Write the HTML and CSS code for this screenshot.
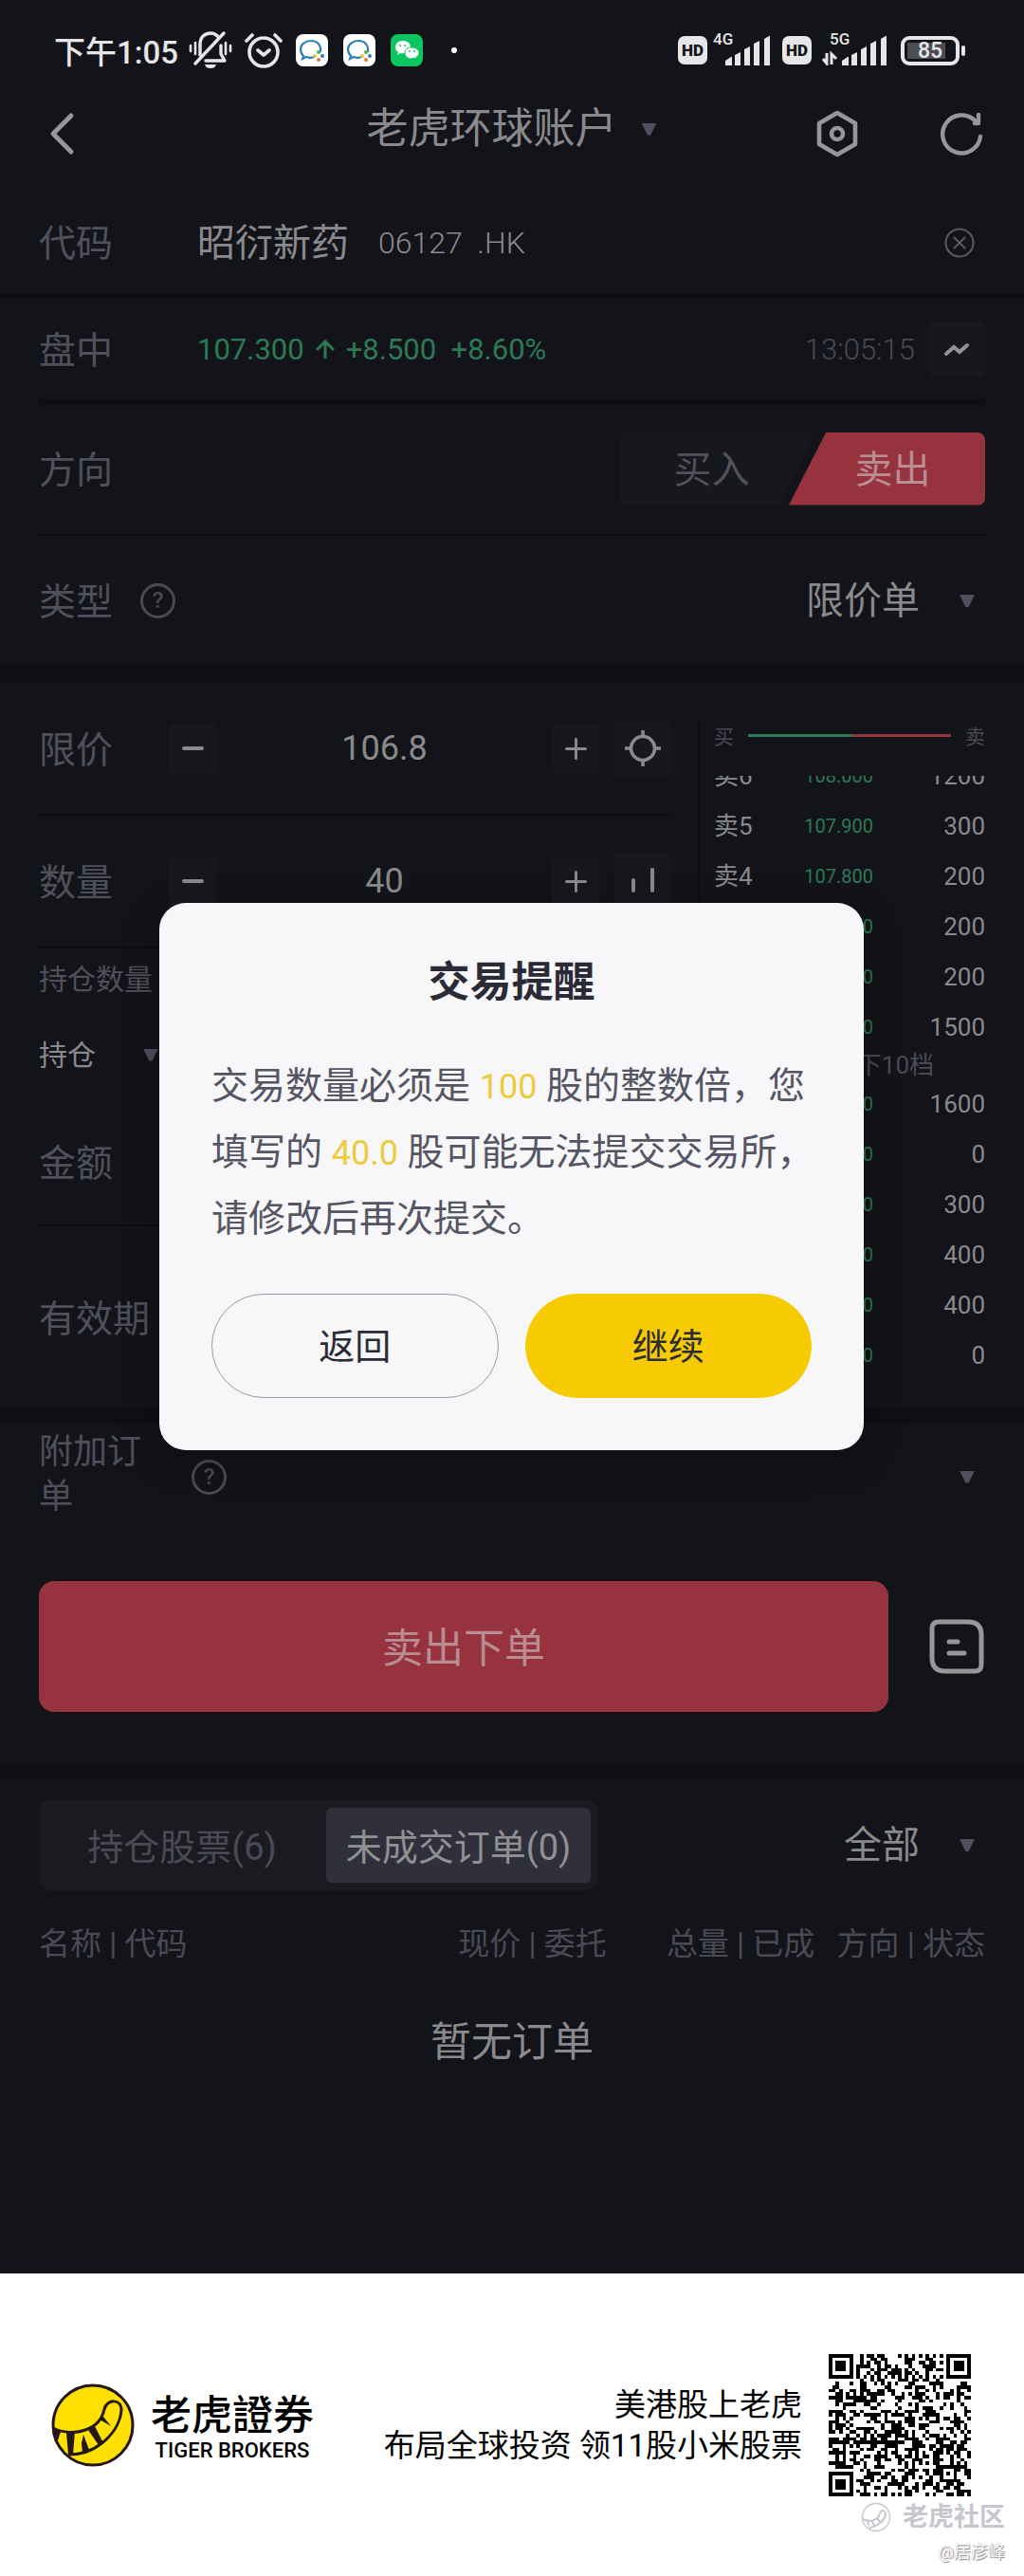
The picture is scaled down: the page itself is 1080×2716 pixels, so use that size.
FILE: index.html
```html
<!DOCTYPE html>
<html lang="zh-CN">
<head>
  <meta charset="UTF-8" />
  <title>交易下单</title>
  <meta name="viewport" content="width=device-width, initial-scale=1.0">
  <link rel="stylesheet" href="styles.css">
</head>
<body>
  <div class="screen">
    <div class="status-bar">
      <span class="clock">下午1:05</span>
      <svg class="mute" width="46" height="40" viewBox="0 0 46 40" fill="none" stroke="#e6e6e6" stroke-width="3.4" stroke-linecap="round">
        <path d="M12 25V14C12 6 17 2 23 2c4 0 7 2 9 5M34 15v9l4 7H18" stroke-linejoin="round" />
        <path d="M37 2L7 34" />
        <path d="M2 15v6M7 12v12M39 12v12M44 15v6" stroke-width="2.6" />
        <path d="M17 35h12c-1 3-3 4-6 4s-5-1-6-4z" fill="#e6e6e6" stroke="none" />
      </svg>
      <svg class="alarm" width="40" height="38" viewBox="0 0 40 38" fill="none" stroke="#e6e6e6" stroke-width="3.6" stroke-linecap="round" stroke-linejoin="round">
        <circle cx="20" cy="21" r="15" />
        <path d="M2 9l6-6M38 9l-6-6M14 19l6 5 6-5" />
      </svg>
      <svg class="app" width="34" height="34" viewBox="0 0 34 34">
        <rect width="34" height="34" rx="8" fill="#fff" />
        <path d="M26 19c1-7-3-12-10-12-6 0-11 4-11 9 0 3 1 5 3 7l-1 3 4-2c3 1 6 1 8 0" fill="none" stroke="#2f7fb5" stroke-width="2.2" />
        <circle cx="24" cy="19" r="2" fill="#5aae46" /><circle cx="28" cy="23" r="2" fill="#2f7fb5" />
        <circle cx="20" cy="23" r="2" fill="#f2c335" /><circle cx="24" cy="27" r="2" fill="#e8743b" />
      </svg>
      <svg class="app" width="34" height="34" viewBox="0 0 34 34">
        <rect width="34" height="34" rx="8" fill="#fff" />
        <path d="M26 19c1-7-3-12-10-12-6 0-11 4-11 9 0 3 1 5 3 7l-1 3 4-2c3 1 6 1 8 0" fill="none" stroke="#2f7fb5" stroke-width="2.2" />
        <circle cx="24" cy="19" r="2" fill="#5aae46" /><circle cx="28" cy="23" r="2" fill="#2f7fb5" />
        <circle cx="20" cy="23" r="2" fill="#f2c335" /><circle cx="24" cy="27" r="2" fill="#e8743b" />
      </svg>
      <svg class="app" width="34" height="34" viewBox="0 0 34 34">
        <rect width="34" height="34" rx="8" fill="#09c75e" />
        <path d="M13 7c-5 0-8 3-8 7 0 2 1 4 3 5l-1 3 3-2c5 1 11-1 11-6s-4-7-8-7z" fill="#fff" />
        <path d="M22 14c-4 0-7 2-7 6 0 3 3 6 7 6l3-1 2 2v-3c2-1 3-2 3-4 0-4-4-6-8-6z" fill="#fff" stroke="#09c75e" />
        <g fill="#09c75e"><circle cx="10" cy="12" r="1" /><circle cx="15" cy="12" r="1" /><circle cx="20" cy="18" r="1" /><circle cx="25" cy="18" r="1" /></g>
      </svg>
      <span class="dot"></span>

      <div class="signals">
        <span class="hd">HD</span>
        <span class="net">
          <small>4G</small>
          <svg width="62" height="32" viewBox="0 0 62 32" fill="#e6e6e6">
            <path d="M14 32v-5l6-4h1v9zM24 32V21l6-3v14zM34 32V15l6-3v20zM44 32V9l6-3v26zM55 32V4l5-3h1v31z" />
          </svg>
        </span>
        <span class="hd">HD</span>
        <span class="net data">
          <small>5G</small>
          <svg width="70" height="32" viewBox="-8 0 70 32" fill="#e6e6e6">
            <path d="M14 32v-5l6-4h1v9zM24 32V21l6-3v14zM34 32V15l6-3v20zM44 32V9l6-3v26zM55 32V4l5-3h1v31z" />
            <path d="M-6 25l4 5v-11M3 31V20l5 5" fill="none" stroke="#e6e6e6" stroke-width="3" />
          </svg>
        </span>
        <span class="battery">85</span>
      </div>
    </div>

    <header class="nav">
      <button class="icon-btn" aria-label="返回上页">
        <svg width="32" height="46" viewBox="0 0 32 46" fill="none" stroke="#979797" stroke-width="5" stroke-linecap="round" stroke-linejoin="round"><path d="M25 4L6 23l19 19" /></svg>
      </button>
      <button class="account">老虎环球账户 <i class="caret"></i></button>
      <div class="nav-tools">
        <button class="icon-btn" aria-label="设置">
          <svg width="46" height="52" viewBox="0 0 46 52" fill="none" stroke="#979797" stroke-width="4.6" stroke-linejoin="round"><path d="M23 4l19 11v22L23 48 4 37V15z" /><circle cx="23" cy="26" r="6" /></svg>
        </button>
        <button class="icon-btn" aria-label="刷新">
          <svg width="46" height="48" viewBox="0 0 46 48" fill="none" stroke="#979797" stroke-width="4.4" stroke-linecap="round" stroke-linejoin="round"><path d="M43 27A20 20 0 1 1 38 11M41 4v9h-4" /></svg>
        </button>
      </div>
    </header>

    <div class="row code-row">
      <span class="label">代码</span>
      <span class="stock">昭衍新药</span>
      <span class="symbol">06127&nbsp; .HK</span>
      <button class="icon-btn clear" aria-label="清除">
        <svg width="34" height="34" viewBox="0 0 34 34" fill="none" stroke="#5c5c5f" stroke-width="2"><circle cx="17" cy="17" r="14.5" /><path d="M11 11l12 12M23 11L11 23" /></svg>
      </button>
    </div>
    <div class="inset">
      <div class="row quote-row">
        <span class="label">盘中</span>
        <span class="quote">107.300
          <svg width="20" height="20" viewBox="0 0 20 20" fill="none" stroke="#2c7a55" stroke-width="3"><path d="M10 20V2M1 11l9-9 9 9" /></svg>
          +8.500&nbsp; +8.60%</span>
        <time>13:05:15</time>
        <button class="box wide" aria-label="走势">
          <svg width="28" height="16" viewBox="0 0 28 16" fill="none" stroke="#929292" stroke-width="4" stroke-linecap="round"><path d="M3 13l8-7 6 5 8-7" /></svg>
        </button>
      </div>
      <div class="row side-row">
        <span class="label">方向</span>
        <div class="toggle">
          <button class="buy">买入</button>
          <button class="sell">卖出</button>
        </div>
      </div>
      <div class="row type-row">
        <label class="label" for="type">类型</label>
        <button class="help" aria-label="说明">?</button>
        <span class="picker"><select id="type"><option>限价单</option></select><i class="caret"></i></span>
      </div>
    </div>

    <div class="trade">
      <div class="form">
        <div class="row tall">
          <label class="label" for="price">限价</label>
          <button class="box" aria-label="减少价格"><i class="minus"></i></button>
          <input id="price" type="text" value="106.8">
          <button class="box" aria-label="增加价格"><i class="plus"></i></button>
          <button class="box wide" aria-label="跟踪价">
            <svg width="38" height="38" viewBox="0 0 38 38" fill="none" stroke="#8a8a8c" stroke-width="3.6"><circle cx="19" cy="19" r="12.5" /><path d="M19 0v7M19 31v7M0 19h7M31 19h7" /></svg>
          </button>
        </div>
        <div class="row tall">
          <label class="label" for="qty">数量</label>
          <button class="box" aria-label="减少数量"><i class="minus"></i></button>
          <input id="qty" type="text" value="40">
          <button class="box" aria-label="增加数量"><i class="plus"></i></button>
          <button class="box wide" aria-label="仓位">
            <svg width="38" height="38" viewBox="0 0 38 38" fill="none" stroke="#8a8a8c" stroke-width="4" stroke-linecap="round"><path d="M9 18v11M29 7v22" /></svg>
          </button>
        </div>
        <div class="row hold-title">持仓数量</div>
        <div class="row hold-row">
          <select aria-label="持仓类型"><option>持仓</option></select><i class="caret"></i>
        </div>
        <div class="row amount-row"><span class="label">金额</span></div>
        <div class="row term-row"><span class="label">有效期</span></div>
      </div>

      <div class="book">
        <div class="ratio"><span>买</span><i class="ratio-bar"></i><span>卖</span></div>
        <div class="book-list">
          <table>
            <tr><th>卖6</th><td class="px">108.000</td><td>1200</td></tr>
            <tr><th>卖5</th><td class="px">107.900</td><td>300</td></tr>
            <tr><th>卖4</th><td class="px">107.800</td><td>200</td></tr>
            <tr><th>卖3</th><td class="px">107.700</td><td>200</td></tr>
            <tr><th>卖2</th><td class="px">107.600</td><td>200</td></tr>
            <tr><th>卖1</th><td class="px">107.500</td><td>1500</td></tr>
            <tr class="depth"><td colspan="3">上下10档</td></tr>
            <tr><th>买1</th><td class="px">107.300</td><td>1600</td></tr>
            <tr><th>买2</th><td class="px">107.200</td><td>0</td></tr>
            <tr><th>买3</th><td class="px">107.100</td><td>300</td></tr>
            <tr><th>买4</th><td class="px">107.000</td><td>400</td></tr>
            <tr><th>买5</th><td class="px">106.900</td><td>400</td></tr>
            <tr><th>买6</th><td class="px">106.800</td><td>0</td></tr>
          </table>
        </div>
      </div>
    </div>

    <div class="row extra-row">
      <span class="label">附加订单</span>
      <button class="help" aria-label="说明">?</button>
      <i class="caret"></i>
    </div>
    <div class="submit-row">
      <button class="submit">卖出下单</button>
      <button class="icon-btn" aria-label="订单详情">
        <svg width="60" height="60" viewBox="0 0 60 60" fill="none" stroke="#979797" stroke-width="5" stroke-linecap="round"><path d="M11 4h31q14 0 14 14v31q0 7-7 7H18Q4 56 4 42V11q0-7 7-7z" /><path d="M22 25h9M22 37h16" /></svg>
      </button>
    </div>

    <div class="orders">
      <div class="orders-top">
        <div class="tabs">
          <button>持仓股票(6)</button>
          <button class="active">未成交订单(0)</button>
        </div>
        <span class="picker"><select aria-label="筛选"><option>全部</option></select><i class="caret"></i></span>
      </div>
      <table class="order-table">
        <thead>
          <tr><th>名称 | 代码</th><th>现价 | 委托</th><th>总量 | 已成</th><th>方向 | 状态</th></tr>
        </thead>
        <tbody>
          <tr><td colspan="4">暂无订单</td></tr>
        </tbody>
      </table>
    </div>

    <div class="dialog" role="dialog" aria-labelledby="dialog-title">
      <h2 id="dialog-title">交易提醒</h2>
      <p>交易数量必须是 <b>100</b> 股的整数倍，您<br>填写的 <b>40.0</b> 股可能无法提交交易所，<br>请修改后再次提交。</p>
      <div class="dialog-actions">
        <button>返回</button>
        <button class="primary">继续</button>
      </div>
    </div>
  </div>

  <footer class="banner">
    <svg class="logo" width="88" height="90" viewBox="0 0 88 90">
      <circle cx="44" cy="45" r="42" fill="#ffe000" stroke="#231815" stroke-width="3" />
      <path d="M2 48C12 53 26 54 36 50 48 46 54 38 56 28c3-11 18-11 18 1-1 14-10 27-22 36-10 8-22 11-34 11" fill="none" stroke="#231815" stroke-width="3" />
      <path d="M2 48l8 4-4 12zM16 53l9-1-2 24h-5zM34 55l6 16-7 3-1-10zM39 50l7-4 9 18-5 2zM51 39l4-3 8 10z" fill="#231815" />
    </svg>
    <div class="brand">
      <strong>老虎證券</strong>
      <span>TIGER BROKERS</span>
    </div>
    <div class="slogan">美港股上老虎<br>布局全球投资 领11股小米股票</div>
    <svg id="qr" class="qr" viewBox="0 0 41 41" shape-rendering="crispEdges"></svg>
    <div class="watermark">
      <div class="community">
        <svg width="32" height="32" viewBox="0 0 32 32" fill="none" stroke="#c6c6ce" stroke-width="1.4"><circle cx="16" cy="16" r="14.5" /><path d="M2 18c8 4 16 1 18-6 1-4 6-4 6 1-1 7-9 13-17 14M7 20l1 5M12 20l2 5M17 17l3 4" stroke-width="2" /></svg>
        <span>老虎社区</span>
      </div>
      <div class="author">@居彦峰</div>
    </div>
  </footer>

  <script src="qr.js"></script>
</body>
</html>
```
FILE: styles.css
```css
* {
  box-sizing: border-box;
}

body {
  margin: 0;
  background-color: #ffffff;
  font-family: Roboto, "Noto Sans CJK SC", sans-serif;
}

button,
input,
select {
  font: inherit;
  color: inherit;
  background: none;
  border: none;
  padding: 0;
  margin: 0;
}

select {
  appearance: none;
}

svg {
  display: block;
}

.screen {
  position: relative;
  background-color: #131419;
  color: #8a8a8c;
  font-size: 40px;
  padding-bottom: 192px;
}

/* status bar */
.status-bar {
  display: flex;
  align-items: center;
  height: 106px;
  padding: 0 68px 0 57px;
  color: #e6e6e6;
}

.clock {
  font-size: 33px;
  font-weight: 500;
}

.mute {
  margin-left: 11px;
}

.alarm {
  margin-left: 13px;
  margin-right: 14px;
}

.app {
  margin-right: 16px;
}

.dot {
  width: 6px;
  height: 6px;
  margin-left: 14px;
  border-radius: 50%;
  background-color: #ffffff;
}

.signals {
  display: flex;
  align-items: center;
  margin-left: auto;
}

.hd {
  width: 31px;
  height: 30px;
  border-radius: 7px;
  background-color: #e6e6e6;
  color: #131419;
  font-size: 17px;
  font-weight: 900;
  line-height: 30px;
  text-align: center;
}

.net {
  position: relative;
  margin: 0 12px 0 5px;
}

.net.data {
  margin-right: 14px;
}

.net small {
  position: absolute;
  top: -4px;
  left: 1px;
  font-size: 17px;
  font-weight: 500;
  line-height: 17px;
}

.net.data small {
  left: 14px;
}

.net.data svg {
  margin-left: 5px;
}

.battery {
  position: relative;
  width: 62px;
  height: 31px;
  border: 4px solid #e6e6e6;
  border-radius: 9px;
  background: linear-gradient(#4c4d51, #4c4d51) 3px center / 40px 17px no-repeat;
  font-size: 23px;
  font-weight: 500;
  line-height: 24px;
  text-align: center;
}

.battery::after {
  content: "";
  position: absolute;
  right: -10px;
  top: 6px;
  width: 4px;
  height: 11px;
  border-radius: 2px;
  background-color: #e6e6e6;
}

/* navigation */
.nav {
  display: flex;
  align-items: center;
  justify-content: space-between;
  height: 70px;
  margin-bottom: 24px;
  padding: 0 43px 0 50px;
}

.account {
  display: flex;
  align-items: center;
  gap: 26px;
  margin-left: 137px;
  padding-bottom: 10px;
  font-size: 44px;
  line-height: 58px;
}

.nav-tools {
  display: flex;
  align-items: center;
  gap: 85px;
}

.caret {
  width: 16px;
  height: 13px;
  background-color: #4f4f60;
  clip-path: polygon(0 0, 100% 0, 60% 100%, 40% 100%);
}

/* form rows */
.row {
  display: flex;
  align-items: center;
  border-bottom: 2px solid #0c0d11;
}

.inset {
  padding: 0 41px;
}

.label,
.stock {
  flex: none;
  padding-bottom: 5px;
}

.label {
  color: #4f505c;
  font-size: 39px;
}

.code-row {
  height: 113px;
  padding: 0 51px 0 41px;
}

.code-row .label,
.quote-row .label {
  width: 167px;
}

.symbol,
.quote,
time {
  font-size: 31px;
  font-weight: 300;
}

.symbol {
  margin-left: 31px;
  font-size: 32px;
}

.clear {
  margin-left: auto;
}

.quote-row {
  height: 112px;
}

.quote {
  display: flex;
  align-items: center;
  gap: 12px;
  color: #2c7a55;
  font-weight: 400;
}

time {
  margin-left: auto;
  margin-right: 14px;
  color: #4a4a56;
}

.box {
  display: flex;
  flex: none;
  align-items: center;
  justify-content: center;
  width: 51px;
  height: 53px;
  border-radius: 6px;
  background-color: #17181d;
}

.box.wide {
  width: 60px;
  height: 60px;
}

.side-row {
  height: 140px;
  justify-content: space-between;
}

.toggle {
  display: flex;
}

.toggle button {
  width: 207px;
  height: 77px;
  border-radius: 8px;
}

.toggle .buy {
  background-color: #17181d;
  color: #4f505c;
  padding: 0 14px 4px 0;
  clip-path: polygon(0 0, 100% 0, 81% 100%, 0 100%);
}

.toggle .sell {
  margin-left: -29px;
  background-color: #97333f;
  color: #b98d92;
  padding: 0 0 4px 12px;
  border-radius: 0 8px 8px 0;
  clip-path: polygon(19% 0, 100% 0, 100% 100%, 0 100%);
}

.type-row {
  height: 137px;
  border-bottom: none;
}

.help {
  width: 37px;
  height: 37px;
  border: 3px solid #4a4a54;
  border-radius: 50%;
  color: #4a4a54;
  font-size: 24px;
  font-weight: 500;
  line-height: 31px;
}

.type-row .help {
  margin-left: 29px;
}

.picker {
  display: flex;
  align-items: center;
  gap: 42px;
  margin-left: auto;
  padding-right: 11px;
}

/* price form and order book */
.trade {
  display: flex;
  border-top: 18px solid #0f1014;
  border-bottom: 17px solid #0f1014;
  padding: 0 41px;
}

.form {
  flex: 1;
  min-width: 0;
  margin-right: 28px;
}

.tall {
  height: 140px;
}

.tall .label {
  width: 137px;
}

.tall input {
  flex: 1;
  min-width: 0;
  font-size: 36px;
  text-align: center;
}

.tall .wide {
  margin-left: 15px;
}

.minus,
.plus {
  position: relative;
  width: 23px;
  height: 4px;
  border-radius: 2px;
  background-color: #8a8a8c;
}

.plus {
  height: 3px;
}

.plus::after {
  content: "";
  position: absolute;
  left: 10px;
  top: -10px;
  width: 3px;
  height: 23px;
  border-radius: 2px;
  background-color: #8a8a8c;
}

.hold-title {
  height: 64px;
  padding-bottom: 4px;
  border-bottom: none;
  color: #4f505c;
  font-size: 30px;
}

.hold-row {
  height: 96px;
  gap: 50px;
  border-bottom: none;
  font-size: 30px;
}

.amount-row {
  height: 133px;
}

.term-row {
  height: 192px;
  border-bottom: none;
}

.book {
  flex: none;
  width: 303px;
  margin: 40px 0 26px;
  padding-left: 15px;
  border-left: 2px solid #0c0d11;
}

.ratio {
  display: flex;
  align-items: center;
  justify-content: space-between;
  height: 30px;
  margin-bottom: 28px;
  color: #4a4a56;
  font-size: 21px;
}

.ratio-bar {
  flex: 1;
  height: 3px;
  margin: 0 15px;
  background: linear-gradient(90deg, #2c7a55 51%, #97333f 51%);
}

.book-list {
  overflow: hidden;
}

.book table {
  width: 100%;
  margin-top: -27px;
  border-collapse: collapse;
  font-size: 26px;
}

.book tr {
  height: 53px;
}

.book th,
.book td {
  padding: 0;
  font-weight: 400;
  line-height: 28px;
  text-align: right;
  white-space: nowrap;
}

.book th {
  width: 60px;
  text-align: left;
}

.book td {
  width: 118px;
}

.book .px {
  width: auto;
  color: #2c7a55;
  font-size: 20px;
}

.book .depth {
  height: 28px;
  color: #4a4a56;
}

.book .depth td {
  padding-right: 54px;
}

/* additional order and submit */
.extra-row {
  height: 110px;
  padding: 0 52px 0 41px;
  border-bottom: none;
}

.extra-row .label {
  width: 125px;
  font-size: 36px;
  line-height: 47px;
}

.extra-row .help {
  margin-left: 36px;
}

.extra-row .caret {
  margin-left: auto;
}

.submit-row {
  display: flex;
  align-items: center;
  gap: 42px;
  padding: 55px 41px;
}

.submit {
  flex: 1;
  height: 138px;
  padding-bottom: 4px;
  border-radius: 16px;
  background-color: #97333f;
  color: #b98d92;
  font-size: 43px;
}

/* orders */
.orders {
  border-top: 17px solid #0f1014;
  padding: 21px 41px 0;
}

.orders-top {
  display: flex;
  align-items: center;
}

.tabs {
  display: flex;
  height: 95px;
  padding: 8px 7px;
  border-radius: 10px;
  background-color: #1a1b21;
}

.tabs button {
  width: 296px;
  padding: 0 8px 3px 0;
  color: #4a4a56;
  font-size: 38px;
}

.tabs .active {
  width: 279px;
  padding-right: 0;
  border-radius: 6px;
  background-color: #2f303b;
  color: #919194;
}

.order-table {
  width: 100%;
  margin-top: 20px;
  border-collapse: collapse;
  table-layout: fixed;
}

.order-table th {
  width: 30%;
  height: 68px;
  padding: 0;
  color: #4a4a56;
  font-size: 33px;
  font-weight: 400;
  text-align: right;
  white-space: nowrap;
}

.order-table th:first-child {
  text-align: left;
}

.order-table th:nth-child(3) {
  width: 22%;
}

.order-table th:nth-child(4) {
  width: 18%;
}

.order-table td {
  height: 124px;
  padding: 20px 0 0;
  font-size: 43px;
  line-height: 60px;
  text-align: center;
}

/* dialog */
.dialog {
  position: absolute;
  top: 952px;
  left: 168px;
  right: 169px;
  padding: 54px 55px 55px;
  border-radius: 28px;
  background-color: #f7f7fa;
  box-shadow: 0 10px 40px rgba(0, 0, 0, 0.3);
}

.dialog h2 {
  margin: 0 0 45px;
  color: #2b2b38;
  font-size: 44px;
  line-height: 60px;
  text-align: center;
}

.dialog p {
  margin: 0 0 44px;
  color: #555564;
  font-size: 39px;
  line-height: 69px;
  white-space: nowrap;
}

.dialog b {
  color: #eccb3c;
  font-size: 36px;
  font-weight: 400;
}

.dialog-actions {
  display: flex;
  gap: 28px;
}

.dialog-actions button {
  flex: 1;
  height: 110px;
  padding-bottom: 6px;
  border: 1px solid #9a9aa2;
  border-radius: 55px;
  color: #2b2b38;
  font-size: 38px;
}

.dialog-actions .primary {
  border-color: #f7cb03;
  background-color: #f7cb03;
}

/* bottom banner */
.banner {
  position: relative;
  display: flex;
  align-items: center;
  height: 319px;
  padding: 0 56px 0 54px;
  color: #000000;
}

.brand {
  display: flex;
  flex-direction: column;
  gap: 3px;
  align-items: center;
  margin-left: 17px;
}

.brand strong {
  font-family: "Noto Sans CJK TC", sans-serif;
  font-size: 43px;
  font-weight: 500;
  line-height: 52px;
}

.brand span {
  font-size: 22px;
  font-weight: 500;
  line-height: 24px;
}

.slogan {
  margin-left: auto;
  margin-right: 28px;
  font-size: 33px;
  line-height: 43px;
  text-align: right;
}

.qr {
  width: 150px;
  height: 150px;
}

.watermark {
  position: absolute;
  right: 20px;
  bottom: 10px;
  color: #c6c6ce;
  text-align: right;
}

.community {
  display: flex;
  align-items: center;
  gap: 12px;
  font-size: 27px;
  font-weight: 700;
  line-height: 44px;
}

.author {
  color: #ffffff;
  font-size: 18px;
  line-height: 30px;
  text-shadow: 1px 1px 1px #85858c, 0 0 1px #a0a0a8;
}
```
FILE: qr.js
```js
const SIZE = 41;
let seed = 6127;

function nextBit() {
  seed = (seed * 1103515245 + 12345) % 2147483648;
  return (seed >> 16) & 1;
}

// concentric squares: 3 = finder, 2 = alignment
function ring(x, y, cx, cy, radius) {
  const d = Math.max(Math.abs(x - cx), Math.abs(y - cy));
  if (d > radius) return null;
  if (radius === 2) return d !== 1;
  return d !== 2 && d !== 4;
}

function isDark(x, y) {
  const bit = nextBit() === 1;
  const marks = [
    ring(x, y, 3, 3, 4),
    ring(x, y, SIZE - 4, 3, 4),
    ring(x, y, 3, SIZE - 4, 4),
    ring(x, y, 34, 34, 2)
  ];
  for (const mark of marks) {
    if (mark !== null) return mark;
  }
  if (x === 6 || y === 6) return (x + y) % 2 === 0;
  return bit;
}

let path = "";
for (let y = 0; y < SIZE; y++) {
  for (let x = 0; x < SIZE; x++) {
    if (isDark(x, y)) path += `M${x} ${y}h1v1h-1z`;
  }
}
document.getElementById("qr").innerHTML = `<path d="${path}"/>`;
```
